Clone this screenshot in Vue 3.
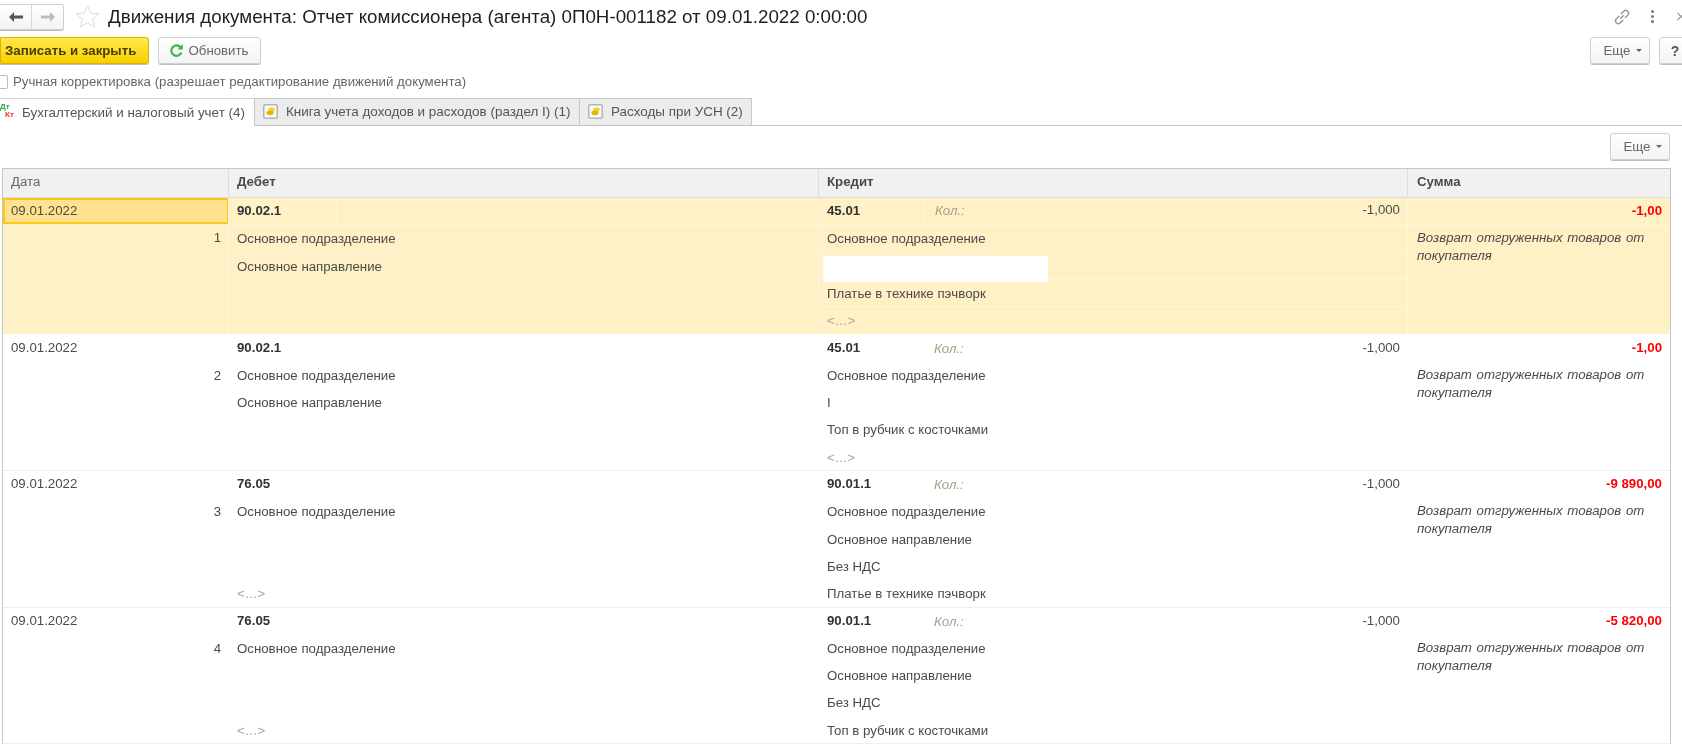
<script setup>
const rows = [
  { n: 1, selected: true, debit: '90.02.1', dl: ['Основное подразделение', 'Основное направление', '', '', ''], credit: '45.01', cl: ['Основное подразделение', '', 'Платье в технике пэчворк', '<...>'], sum: '-1,00' },
  { n: 2, debit: '90.02.1', dl: ['Основное подразделение', 'Основное направление', '', '', ''], credit: '45.01', cl: ['Основное подразделение', 'I', 'Топ в рубчик с косточками', '<...>'], sum: '-1,00' },
  { n: 3, debit: '76.05', dl: ['Основное подразделение', '', '', '<...>'], credit: '90.01.1', cl: ['Основное подразделение', 'Основное направление', 'Без НДС', 'Платье в технике пэчворк'], sum: '-9 890,00' },
  { n: 4, debit: '76.05', dl: ['Основное подразделение', '', '', '<...>'], credit: '90.01.1', cl: ['Основное подразделение', 'Основное направление', 'Без НДС', 'Топ в рубчик с косточками'], sum: '-5 820,00' }
]
const muted = (t) => t === '<...>'
</script>

<template>
  <div class="page">
    <header class="titlebar">
      <div class="nav">
        <button class="nav-btn"><svg width="16" height="12" viewBox="0 0 16 12"><path d="M1 6l5-5v3.5h9v3H6V11z" fill="#555"/></svg></button>
        <button class="nav-btn"><svg width="16" height="12" viewBox="0 0 16 12"><path d="M15 6l-5-5v3.5H1v3h9V11z" fill="#bbb"/></svg></button>
      </div>
      <svg class="star" width="25" height="25" viewBox="0 0 25 25"><path d="M12.5 1.5l3.2 7.6 8.2.7-6.2 5.4 1.9 8-7.1-4.3-7.1 4.3 1.9-8L1.1 9.8l8.2-.7z" fill="none" stroke="#dcdcdc"/></svg>
      <h1>Движения документа: Отчет комиссионера (агента) 0П0Н-001182 от 09.01.2022 0:00:00</h1>
      <svg class="link" width="20" height="20" viewBox="0 0 18 18"><g fill="none" stroke="#999" stroke-width="1.3"><path d="M7.5 10.5l3-3"/><path d="M6.5 8L3.6 10.9a2.6 2.6 0 0 0 3.6 3.6L10 11.6"/><path d="M8 6.4l2.9-2.9a2.6 2.6 0 0 1 3.6 3.6L11.6 10"/></g></svg>
      <span class="dots"><i></i><i></i><i></i></span>
      <svg class="close" width="5" height="9" viewBox="0 0 5 9"><path d="M.5 1l7 7M7.5 1l-7 7" fill="none" stroke="#999" stroke-width="1.2"/></svg>
    </header>

    <div class="toolbar">
      <button class="btn primary">Записать и закрыть</button>
      <button class="btn refresh">
        <svg width="15" height="15" viewBox="0 0 15 15"><path d="M12.4 9.5a5.2 5.2 0 1 1-.8-5.2" fill="none" stroke="#3cb54a" stroke-width="2.2"/><path d="M13.8 1v5.4H8.4z" fill="#3cb54a"/></svg>
        Обновить
      </button>
      <span class="spacer"></span>
      <button class="btn more">Еще <b class="caret"></b></button>
      <button class="btn help">?</button>
    </div>

    <label class="check"><span class="box"></span>Ручная корректировка (разрешает редактирование движений документа)</label>

    <nav class="tabs">
      <div class="tab active">
        <span class="dtkt"><em class="dt">Дт</em><em class="kt">Кт</em></span>
        Бухгалтерский и налоговый учет (4)
      </div>
      <div class="tab tab2">
        <svg width="15" height="15" viewBox="0 0 15 15"><rect x=".75" y=".75" width="13.5" height="13.5" rx="1.5" fill="#f8f8f8" stroke="#b4b4b4" stroke-width="1.5"/><ellipse cx="8.5" cy="5.6" rx="3.2" ry="2" fill="#f5d21f"/><ellipse cx="7" cy="8.8" rx="3.6" ry="2.4" fill="#e4b40c"/></svg>
        Книга учета доходов и расходов (раздел I) (1)
      </div>
      <div class="tab tab3">
        <svg width="15" height="15" viewBox="0 0 15 15"><rect x=".75" y=".75" width="13.5" height="13.5" rx="1.5" fill="#f8f8f8" stroke="#b4b4b4" stroke-width="1.5"/><ellipse cx="8.5" cy="5.6" rx="3.2" ry="2" fill="#f5d21f"/><ellipse cx="7" cy="8.8" rx="3.6" ry="2.4" fill="#e4b40c"/></svg>
        Расходы при УСН (2)
      </div>
    </nav>

    <div class="subbar">
      <button class="btn more">Еще <b class="caret"></b></button>
    </div>

    <section class="table">
      <div class="head">
        <div class="hcell plain">Дата</div>
        <div class="hcell">Дебет</div>
        <div class="hcell">Кредит</div>
        <div class="hcell">Сумма</div>
      </div>
      <div v-for="r in rows" :key="r.n" class="row" :class="{ selected: r.selected }">
        <div class="col">
          <div class="line date">09.01.2022</div>
          <div class="line num">{{ r.n }}</div>
        </div>
        <div class="col">
          <div class="line first">
            <b class="acc">{{ r.debit }}</b>
            <template v-if="r.selected"><span class="part d1"></span><span class="part d2"></span></template>
          </div>
          <div v-for="(t, i) in r.dl" :key="i" class="line" :class="{ muted: muted(t), bare: i > 0 }">{{ t }}</div>
        </div>
        <div class="col">
          <div class="line first">
            <b class="acc acc-c">{{ r.credit }}</b>
            <span class="qty" :class="{ sep: r.selected }">Кол.:</span>
            <span class="amount" :class="{ sep: r.selected }">-1,000</span>
          </div>
          <div v-for="(t, i) in r.cl" :key="i" class="line" :class="{ muted: muted(t), redacted: r.selected && i === 1 }">
            <span v-if="r.selected && i === 1" class="mask"></span>{{ t }}
          </div>
        </div>
        <div class="col">
          <div class="line sum">{{ r.sum }}</div>
          <div class="comment">Возврат отгруженных товаров от покупателя</div>
        </div>
      </div>
    </section>
  </div>
</template>

<style>
html, body { margin: 0; background: #fff; overflow: hidden; }
</style>

<style scoped>
.page { width: 1682px; height: 750px; overflow: hidden; font: 13.25px "Liberation Sans", Arial, sans-serif; color: #4b4b4b; filter: blur(0.35px); }
.titlebar { height: 33px; display: flex; align-items: center; box-sizing: border-box; }
.nav { display: flex; width: 64px; height: 26px; box-sizing: border-box; border: 1px solid #cfcfcf; border-left: 0; border-radius: 0 3px 3px 0; background: linear-gradient(#fff, #f3f3f3); box-shadow: 0 1px 0 #bdbdbd; }
.nav-btn { flex: 1; border: 0; padding: 0; background: none; display: flex; align-items: center; justify-content: center; }
.nav-btn + .nav-btn { border-left: 1px solid #d8d8d8; }
.star { margin-left: 11px; flex: none; }
h1 { margin: 0 0 0 8px; font-size: 18.75px; font-weight: 400; color: #1f1f1f; white-space: nowrap; flex: 1; }
.link { flex: none; }
.dots { display: flex; flex-direction: column; gap: 2px; margin-left: 19px; width: 3px; }
.dots i { width: 3px; height: 3px; background: #777; border-radius: 50%; }
.close { margin-left: 23px; flex: none; }
.toolbar { height: 27px; margin-top: 4px; display: flex; gap: 9px; }
.spacer { flex: 1; }
.btn { height: 27px; box-sizing: border-box; border: 1px solid #cfcfcf; border-radius: 3px; background: linear-gradient(#fff, #f3f3f3); box-shadow: 0 1px 0 #bdbdbd; font: 13.25px "Liberation Sans", Arial, sans-serif; color: #666; padding: 0; display: flex; align-items: center; justify-content: center; }
.primary { width: 149px; justify-content: flex-start; padding-left: 4px; border-radius: 0 3px 3px 0; border-color: #d9b400; background: linear-gradient(#ffe94d, #f9cf00); color: #4a4000; font-weight: 700; }
.refresh { width: 103px; gap: 5px; padding-right: 2px; }
.more { width: 60px; gap: 6px; padding-left: 6px; }
.help { width: 30px; margin-right: -7px; padding-left: 2px; font-size: 14px; font-weight: 700; color: #555; }
.caret { width: 0; height: 0; border: 3px solid transparent; border-top-color: #666; border-bottom: 0; }
.check { display: flex; align-items: center; height: 17px; margin-top: 9px; color: #666; }
.box { width: 8px; height: 14px; margin-right: 5px; box-sizing: border-box; border: 1px solid #bbb; border-left: 0; border-radius: 0 2px 2px 0; }
.tabs { display: flex; height: 28px; margin-top: 8px; border-bottom: 1px solid #c4c4c4; box-sizing: border-box; font-size: 13.45px; }
.tab { height: 27px; box-sizing: border-box; display: flex; align-items: center; padding-bottom: 1px; white-space: nowrap; color: #555; background: #ececec; border: 1px solid #c8c8c8; border-left: 0; border-bottom: 0; padding-left: 8px; gap: 8px; }
.active { width: 255px; padding-left: 0; gap: 4px; background: #fff; height: 28px; border-top: 1px solid #d4d4d4; color: #555; }
.tab2 { width: 325px; }
.tab3 { width: 172px; }
.dtkt { width: 18px; display: flex; flex-direction: column; line-height: 8px; font-size: 8px; font-weight: 700; position: relative; top: -1px; }
.dtkt em { font-style: normal; }
.dt { color: #2aa84a; }
.kt { color: #e33; margin-left: 5px; }
.subbar { display: flex; justify-content: flex-end; padding: 7px 12px 0 0; height: 34px; box-sizing: border-box; }
.table { margin: 8px 0 0 2px; width: 1669px; box-sizing: border-box; border: 1px solid #c6c6c6; border-bottom: 0; }
.head, .row { display: grid; grid-template-columns: 226px 590px 589px 262px; }
.head { height: 29px; background: #f1f1f1; border-bottom: 1px solid #dcdcdc; box-sizing: border-box; }
.hcell { padding: 0 8px; line-height: 26px; font-weight: 700; border-right: 1px solid #dcdcdc; box-sizing: border-box; }
.hcell:last-child { border-right: 0; padding-left: 9px; }
.hcell.plain { font-weight: 400; color: #666; }
.row { height: 136.5px; border-bottom: 1px solid #eee; box-sizing: border-box; overflow: hidden; }
.col { min-width: 0; display: flex; flex-direction: column; position: relative; }
.line { height: 27.3px; flex: none; line-height: 27px; padding: 0 8px; box-sizing: border-box; white-space: nowrap; position: relative; }
.line.first, .line.date, .line.sum { line-height: 25px; }
.num { text-align: right; }
.first { display: flex; }
.acc { color: #333; width: 100%; }
.acc-c { flex: none; width: 97px; }
.qty { flex: none; width: 78px; padding-left: 10px; padding-top: 1px; box-sizing: border-box; font-style: italic; color: #a89f8a; }
.amount { flex: 1; text-align: right; }
.muted { color: #a5a5a5; letter-spacing: .4px; }
.sum { text-align: right; font-weight: 700; color: #f00; }
.comment { padding: 4px 8px 0 9px; font-style: italic; line-height: 18px; word-spacing: 1px; }
.selected { background: #fef1c6; border-bottom-color: #fff; }
.selected .col + .col { border-left: 1px solid #fff7dd; margin-left: -1px; }
.selected .line { border-bottom: 1px solid #fff7dd; }
.selected .col:first-child .line.num { border-bottom: 0; }
.selected .bare { border-bottom: 0; }
.selected .date { background: #ffe28e; border: 2px solid #ffc61a; line-height: 21px; height: 26px; padding-left: 6px; }
.selected .line:last-child { border-bottom: 0; }
.part { position: absolute; top: 0; bottom: 0; width: 1px; background: #fff7dd; }
.d1 { left: 107px; }
.d2 { left: 184px; }
.selected .sep { border-left: 1px solid #fff7dd; margin-top: -1px; }
.mask { position: absolute; left: 4px; top: 3px; width: 225px; height: 26px; background: #fff; }
.redacted { z-index: 1; }
</style>
